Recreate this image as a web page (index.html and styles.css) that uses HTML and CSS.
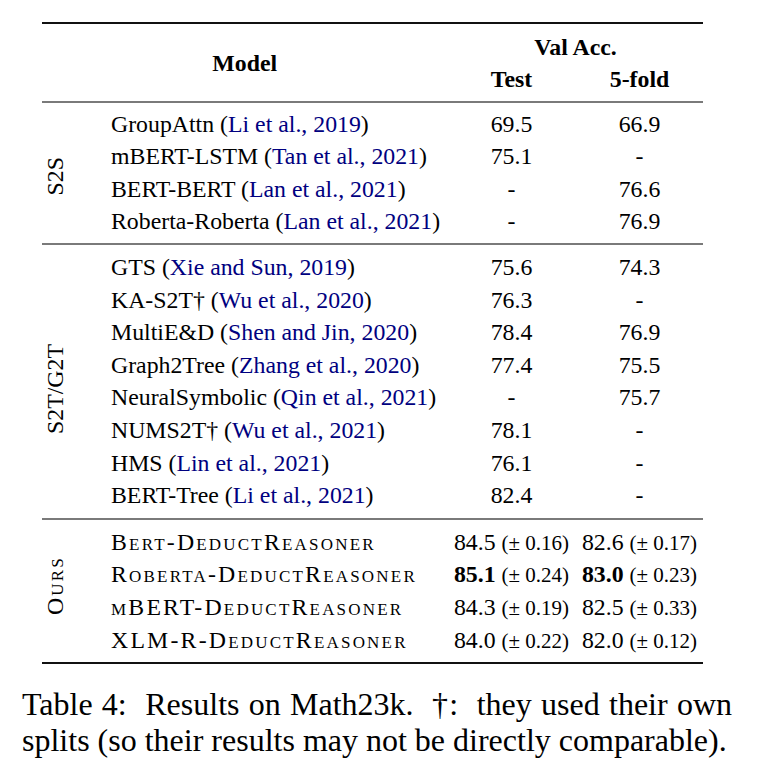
FILE: index.html
```html
<!DOCTYPE html>
<html lang="en">
<head>
<meta charset="utf-8">
<title>Table 4: Results on Math23k</title>
<link rel="stylesheet" href="styles.css">
</head>
<body>
<div class="page">
  <div class="tbl">
    <div class="rule heavy"></div>
    <div class="head">
      <div class="h-model">Model</div>
      <div class="h-val">Val Acc.</div>
      <div class="h-test">Test</div>
      <div class="h-fold">5-fold</div>
    </div>
    <div class="rule light"></div>

    <div class="group g-s2s">
      <div class="label"><span>S2S</span></div>
      <div class="rows">
        <div class="row"><div class="name">GroupAttn (<span class="cite">Li et al., 2019</span>)</div><div class="num">69.5</div><div class="num">66.9</div></div>
        <div class="row"><div class="name">mBERT-LSTM (<span class="cite">Tan et al., 2021</span>)</div><div class="num">75.1</div><div class="num">-</div></div>
        <div class="row"><div class="name">BERT-BERT (<span class="cite">Lan et al., 2021</span>)</div><div class="num">-</div><div class="num">76.6</div></div>
        <div class="row"><div class="name">Roberta-Roberta (<span class="cite">Lan et al., 2021</span>)</div><div class="num">-</div><div class="num">76.9</div></div>
      </div>
    </div>
    <div class="rule light"></div>

    <div class="group g-s2t">
      <div class="label"><span>S2T/G2T</span></div>
      <div class="rows">
        <div class="row"><div class="name">GTS (<span class="cite">Xie and Sun, 2019</span>)</div><div class="num">75.6</div><div class="num">74.3</div></div>
        <div class="row"><div class="name">KA-S2T† (<span class="cite">Wu et al., 2020</span>)</div><div class="num">76.3</div><div class="num">-</div></div>
        <div class="row"><div class="name">MultiE&amp;D (<span class="cite">Shen and Jin, 2020</span>)</div><div class="num">78.4</div><div class="num">76.9</div></div>
        <div class="row"><div class="name">Graph2Tree (<span class="cite">Zhang et al., 2020</span>)</div><div class="num">77.4</div><div class="num">75.5</div></div>
        <div class="row"><div class="name">NeuralSymbolic (<span class="cite">Qin et al., 2021</span>)</div><div class="num">-</div><div class="num">75.7</div></div>
        <div class="row"><div class="name">NUMS2T† (<span class="cite">Wu et al., 2021</span>)</div><div class="num">78.1</div><div class="num">-</div></div>
        <div class="row"><div class="name">HMS (<span class="cite">Lin et al., 2021</span>)</div><div class="num">76.1</div><div class="num">-</div></div>
        <div class="row"><div class="name">BERT-Tree (<span class="cite">Li et al., 2021</span>)</div><div class="num">82.4</div><div class="num">-</div></div>
      </div>
    </div>
    <div class="rule light"></div>

    <div class="group g-ours">
      <div class="label"><span class="sc">Ours</span></div>
      <div class="rows">
        <div class="row"><div class="name sc">Bert-DeductReasoner</div><div class="num">84.5 <span class="pm">(± 0.16)</span></div><div class="num">82.6 <span class="pm">(± 0.17)</span></div></div>
        <div class="row"><div class="name sc">Roberta-DeductReasoner</div><div class="num"><b>85.1</b> <span class="pm">(± 0.24)</span></div><div class="num"><b>83.0</b> <span class="pm">(± 0.23)</span></div></div>
        <div class="row"><div class="name sc">mBERT-DeductReasoner</div><div class="num">84.3 <span class="pm">(± 0.19)</span></div><div class="num">82.5 <span class="pm">(± 0.33)</span></div></div>
        <div class="row"><div class="name sc">XLM-R-DeductReasoner</div><div class="num">84.0 <span class="pm">(± 0.22)</span></div><div class="num">82.0 <span class="pm">(± 0.12)</span></div></div>
      </div>
    </div>
    <div class="rule heavy"></div>
  </div>

  <p class="caption">Table 4:&nbsp; Results on Math23k.&nbsp; †:&nbsp; they used their own splits (so their results may not be directly comparable).</p>
</div>
</body>
</html>
```

FILE: styles.css
```css
* { box-sizing: border-box; }

html, body {
  margin: 0;
  padding: 0;
  background: #fff;
}

body {
  font-family: 'Liberation Serif', 'Times New Roman', serif;
  color: #000;
}

.page {
  width: 768px;
  padding: 22px 0 0 22px;
}

.tbl {
  margin-left: 20px;
  width: 661.5px;
  font-size: 23.8px;
  line-height: 32.6px;
}

.rule { width: 661px; }
.heavy { height: 2px; background: #111; }
.light { height: 2px; background: #7a7a7a; }

.head {
  display: grid;
  grid-template-columns: 405.5px 128px 128px;
  grid-template-rows: 32.6px 32.6px;
  padding: 6.5px 0 5px;
  font-weight: bold;
  text-align: center;
}
.h-model { grid-column: 1; grid-row: 1 / 3; align-self: center; }
.h-val { grid-column: 2 / 4; grid-row: 1; }
.h-test { grid-column: 2; grid-row: 2; }
.h-fold { grid-column: 3; grid-row: 2; }

.group {
  display: flex;
  padding: 5px 0;
}
.g-s2t { padding: 6px 0 6.5px; }
.g-ours { padding: 5.5px 0; }

.label {
  width: 61.5px;
  flex: none;
  display: flex;
  align-items: center;
  padding-left: 1px;
}
.g-s2s .label { padding-top: 6px; }
.g-s2t .label { padding-top: 16px; }
.g-ours .label { padding-bottom: 10px; }

.label span {
  writing-mode: vertical-rl;
  transform: rotate(180deg);
  line-height: 24px;
  white-space: nowrap;
}

.rows {
  display: flex;
  flex-direction: column;
}

.row {
  display: grid;
  grid-template-columns: 344px 128px 128px;
  height: 32.6px;
}

.name {
  padding-left: 7.5px;
  white-space: nowrap;
}

.num {
  text-align: center;
  white-space: nowrap;
}

.cite { color: #000080; }

.sc {
  font-variant: small-caps;
  letter-spacing: 2.2px;
}

.pm { font-size: 21px; }

.caption {
  width: 710px;
  margin: 22px 0 0;
  font-size: 32px;
  line-height: 36.5px;
  text-align: justify;
}
```
